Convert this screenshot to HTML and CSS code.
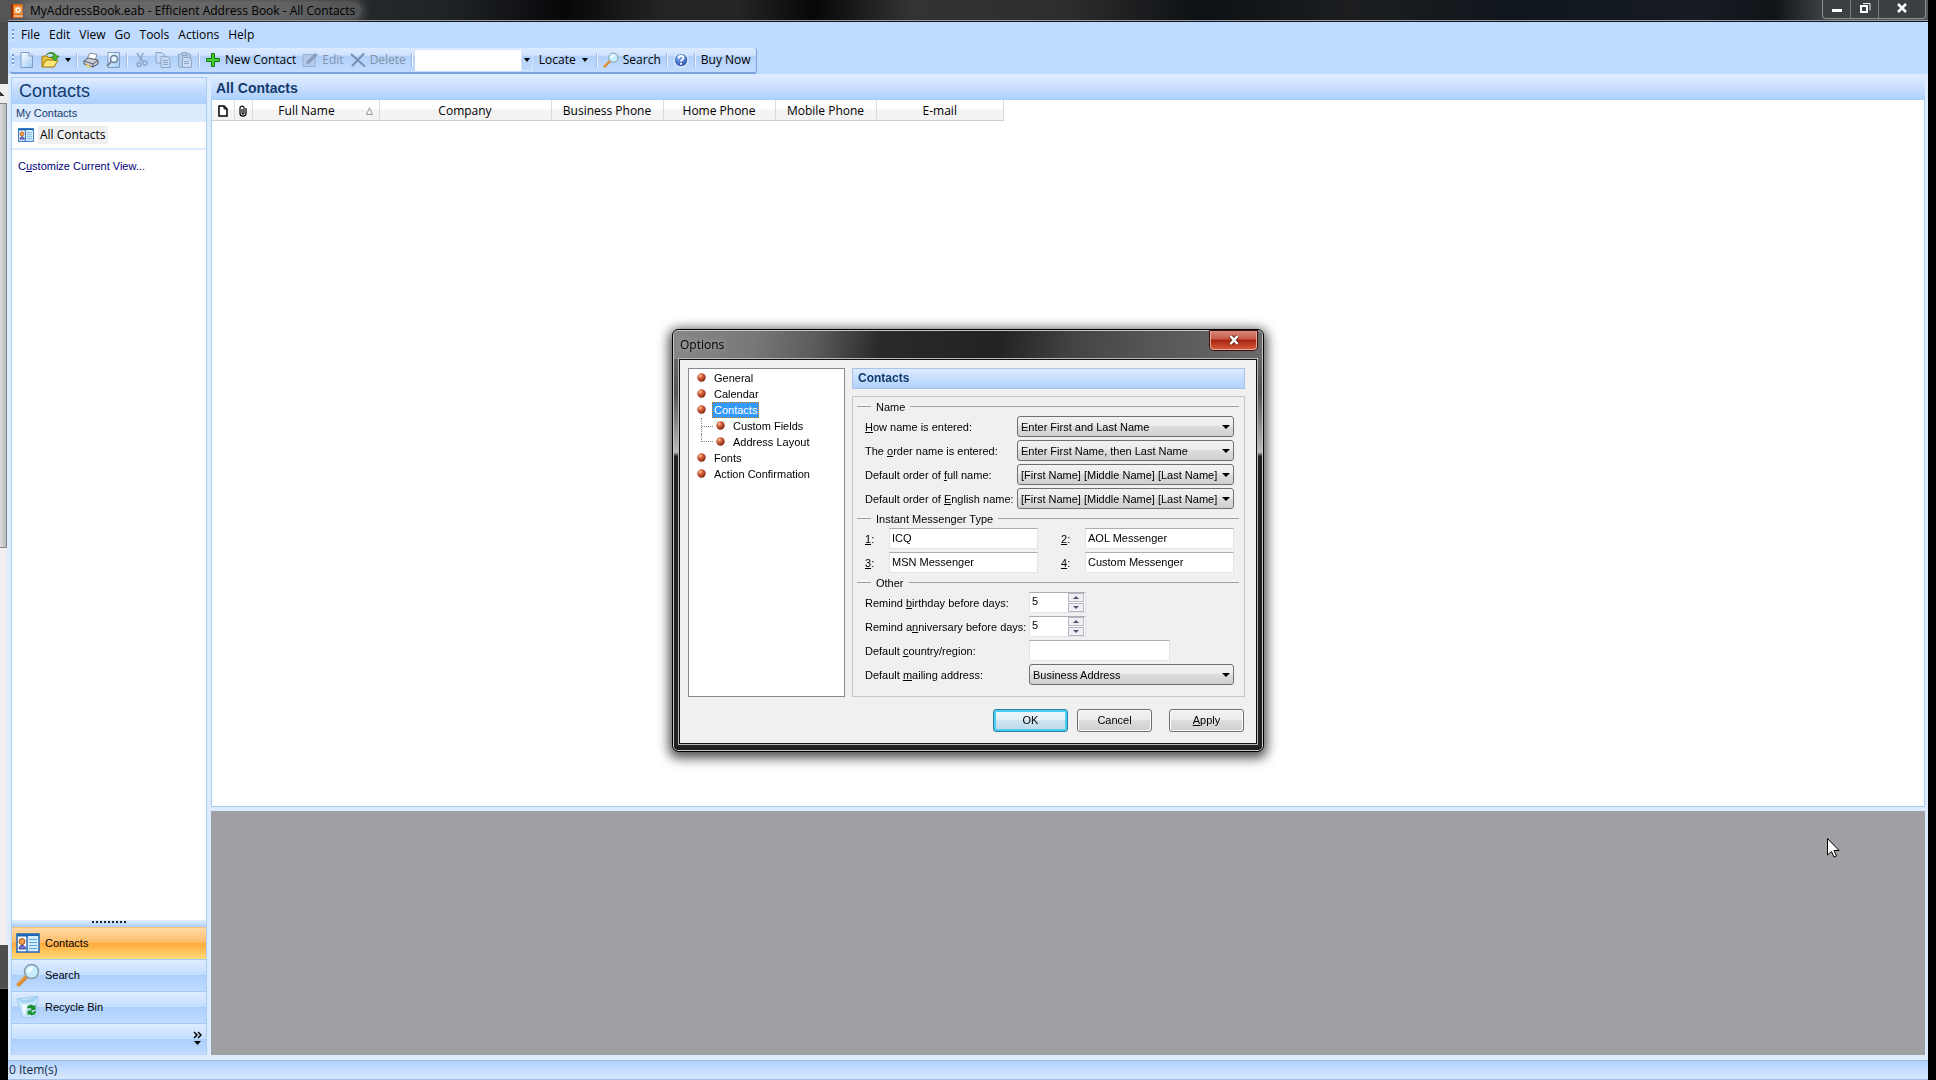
FILE: index.html
```html
<!DOCTYPE html>
<html lang="en">
<head>
<meta charset="utf-8">
<title>MyAddressBook.eab - Efficient Address Book - All Contacts</title>
<link rel="stylesheet" href="styles.css">
</head>
<body>
<svg class="defs" aria-hidden="true">
  <defs>
    <linearGradient id="sky" x1="0" y1="0" x2="1" y2="1"><stop offset="0" stop-color="#fff"/><stop offset="1" stop-color="#9cc8f4"/></linearGradient>
    <linearGradient id="handle" x1="0" y1="0" x2="1" y2="1"><stop offset="0" stop-color="#f7b55a"/><stop offset="1" stop-color="#c96a18"/></linearGradient>
    <radialGradient id="ball" cx=".35" cy=".3" r=".8"><stop offset="0" stop-color="#ffc9b0"/><stop offset=".35" stop-color="#d9603a"/><stop offset="1" stop-color="#6a2010"/></radialGradient>
    <radialGradient id="help" cx=".4" cy=".25" r=".8"><stop offset="0" stop-color="#8db4f0"/><stop offset="1" stop-color="#1b49a8"/></radialGradient>
    <symbol id="magnifier" viewBox="0 0 24 24">
      <path d="M10 14 2.500 21.500" stroke="url(#handle)" stroke-width="4" stroke-linecap="round"/>
      <circle cx="15.500" cy="8.500" r="7" fill="#c4eefb" stroke="#8b9aa8" stroke-width="1.500"/>
      <path d="M11 9a5 5 0 0 1 6-5c0 4-3 6-6 5z" fill="#fff" opacity=".8"/>
    </symbol>
    <symbol id="card" viewBox="0 0 24 20">
      <rect x="1" y="1" width="22" height="18" fill="#fff" stroke="#1c68b8" stroke-width="1.500"/>
      <path d="M1 1h22v2.500H1z" fill="#1c68b8"/><path d="M12 3h10v15H12z" fill="#d4ecfb"/><path d="M11 3v16" stroke="#1c68b8" stroke-width="1.500"/>
      <path d="M13 6.500h8M13 9.500h8M13 12.500h8M13 15.500h8" stroke="#5aa4dc"/>
      <circle cx="6" cy="8.500" r="3" fill="#f0a050" stroke="#a85018"/><path d="M3 16c0-5 6.500-5 6.500 0z" fill="#6c74d0" stroke="#40489c"/>
    </symbol>
    <symbol id="bullet" viewBox="0 0 9 9"><circle cx="4.500" cy="4.500" r="4.200" fill="url(#ball)"/></symbol>
  </defs>
</svg>

<div class="desktop">
  <div class="behind" aria-hidden="true">
    <div class="behind-title"></div>
    <div class="behind-arrow"></div>
    <div class="behind-thumb"></div>
    <div class="behind-track"></div>
    <div class="behind-foot"></div>
    <div class="behind-dark"></div>
  </div>

  <div class="app">
    <header class="titlebar">
      <svg class="app-icon" width="14" height="16" viewBox="0 0 14 16"><rect x="1" y="1" width="12" height="14" rx="1" fill="#e06a10"/><path d="M1 1h2v14H1z" fill="#8c2c08"/><rect x="4" y="3" width="8" height="8" fill="#f8a040"/><circle cx="8" cy="7" r="2" fill="none" stroke="#fff" stroke-width="1.500"/><path d="M4 13h9" stroke="#fff"/></svg>
      <h1 class="title"><span>MyAddressBook.eab - Efficient Address Book - All Contacts</span></h1>
      <div class="window-buttons">
        <button type="button" aria-label="Minimize"><svg width="12" height="12"><path d="M1 8.500h10" stroke="#fff" stroke-width="3"/></svg></button>
        <button type="button" aria-label="Restore"><svg width="12" height="12"><path d="M4 1.500h7v7" fill="none" stroke="#eee"/><rect x="2" y="4" width="6" height="6" fill="none" stroke="#fff" stroke-width="2"/></svg></button>
        <button type="button" class="wide" aria-label="Close"><svg width="12" height="12"><path d="m2 2 8 8M10 2 2 10" stroke="#fff" stroke-width="2.500"/></svg></button>
      </div>
    </header>

    <nav class="menubar" aria-label="Menu">
      <span class="grip"></span>
      <button type="button">File</button><button type="button">Edit</button><button type="button">View</button><button type="button">Go</button><button type="button">Tools</button><button type="button">Actions</button><button type="button">Help</button>
    </nav>

    <div class="toolbar-row">
      <div class="toolbar" role="toolbar" aria-label="Standard">
        <span class="grip"></span>
        <button type="button" class="tool" aria-label="New"><svg width="16" height="16"><path d="M2 .500h8l3.500 3.500v11.500H2z" fill="url(#sky)" stroke="#7c9cc8"/><path d="M10 .500V4h3.500" fill="#e8f2fc" stroke="#7c9cc8"/></svg></button>
        <button type="button" class="tool open" aria-label="Open"><svg width="18" height="16"><path d="M1 15V5l1-1h4l1.500 1.500H14V9" fill="#e8c040" stroke="#9a7810"/><path d="m1 15 4-7h12l-4 7z" fill="#fbe678" stroke="#9a7810"/><path d="M5 3c4-3 7-2 8 2h-3l4 4 4-5h-2.500C14 0 9-1 5 3z" fill="#4cb82c" stroke="#207010" stroke-width=".7"/></svg><span class="arrow"></span></button>
        <span class="sep"></span>
        <button type="button" class="tool" aria-label="Print"><svg width="16" height="16"><path d="m4 7 3-6 7 1.500-2 6z" fill="#fff" stroke="#889"/><path d="m1 9 4-3 10 2v4l-5 3-9-3z" fill="#c8ccd4" stroke="#555c68"/><path d="m1 9 9 3 5-4M10 12v3" fill="none" stroke="#555c68"/><path d="m3 13 4 2" stroke="#e8d060" stroke-width="2"/></svg></button>
        <button type="button" class="tool" aria-label="Print preview"><svg width="16" height="16"><path d="M3 .500h11.500v15H3z" fill="url(#sky)" stroke="#7c9cc8"/><circle cx="9" cy="7" r="3.500" fill="#e4f8ff" stroke="#6a7c98" stroke-width="1.500"/><path d="m6 10-4 4" stroke="#7a8498" stroke-width="2"/></svg></button>
        <span class="sep"></span>
        <button type="button" class="tool" aria-label="Cut" disabled><svg width="16" height="16" fill="none" stroke="#8fa5c6" stroke-width="1.500"><path d="m4 1 6 9M10 1 7 9"/><circle cx="6" cy="12.500" r="2"/><circle cx="12" cy="11" r="2"/></svg></button>
        <button type="button" class="tool" aria-label="Copy" disabled><svg width="16" height="16" fill="#c4daf6" stroke="#8fa5c6"><path d="M1 .500h6L9.500 3v8H1z"/><path d="M6 4.500h6L15 7v8.500H6z"/><path d="M8 8.500h5M8 10.500h5M8 12.500h5"/></svg></button>
        <button type="button" class="tool" aria-label="Paste" disabled><svg width="16" height="16" fill="#b4cbec" stroke="#8fa5c6"><rect x="1.500" y="2" width="12" height="13" rx="1"/><path d="M5 .500h5v3H5z"/><path d="M5.500 5.500H12l2.500 2.500v7.500h-9z" fill="#c8dcf6"/><path d="M7 9.500h5M7 11.500h5"/></svg></button>
        <span class="sep"></span>
        <button type="button" class="tool"><svg width="16" height="16"><path d="M6.500 1.500h3v5h5v3h-5v5h-3v-5h-5v-3h5z" fill="#44d02c" stroke="#167410"/></svg>New Contact</button>
        <button type="button" class="tool" disabled><svg width="16" height="16"><path d="M1 2.500h12v12H1z" fill="#b4cbec" stroke="#98b0d4"/><path d="m4 13 1-4 8-8 3 2-8 8z" fill="#88a0c4"/></svg>Edit</button>
        <button type="button" class="tool" disabled><svg width="16" height="16"><path d="m1 2 14 12.500M14 1.500 2 14" stroke="#7890b4" stroke-width="2"/></svg>Delete</button>
        <span class="sep"></span>
        <span class="combo"><input type="text" aria-label="Locate text"><button type="button" aria-label="Show list"><span class="arrow"></span></button></span>
        <button type="button" class="tool locate">Locate<span class="arrow"></span></button>
        <span class="sep"></span>
        <button type="button" class="tool"><svg width="16" height="16"><use href="#magnifier"/></svg>Search</button>
        <span class="sep"></span>
        <button type="button" class="tool" aria-label="Help"><svg width="16" height="16"><circle cx="8" cy="8" r="7" fill="url(#help)" stroke="#dce8fa" stroke-width="1.500"/><path d="M5.500 6.500c0-3.500 5-3.500 5-.5 0 1.800-2.500 1.800-2.500 3.500" fill="none" stroke="#fff" stroke-width="1.800"/><circle cx="8" cy="11.800" r="1.100" fill="#fff"/></svg></button>
        <span class="sep"></span>
        <button type="button" class="tool">Buy Now</button>
      </div>
    </div>

    <div class="workspace">
      <aside class="sidebar">
        <h2 class="side-title">Contacts</h2>
        <h3 class="side-group">My Contacts</h3>
        <a class="side-item" href="#"><svg width="16" height="14" viewBox="0 0 24 20" preserveAspectRatio="none"><use href="#card" width="24" height="20"/></svg><span>All Contacts</span></a>
        <div class="side-body"><a href="#">C<u>u</u>stomize Current View...</a></div>
        <div class="splitter"><span></span></div>
        <nav class="side-nav" aria-label="Sections">
          <button type="button" class="current"><svg width="24" height="20"><use href="#card"/></svg>Contacts</button>
          <button type="button"><svg width="24" height="24"><use href="#magnifier"/></svg>Search</button>
          <button type="button"><svg width="24" height="24" viewBox="0 0 24 24"><path d="m1 4 21-3-3 20q-6 3.500-13 0z" fill="#c8e8fa" stroke="#90c4ec" stroke-width=".8"/><path d="m1 4 9 1 12-4-4 6-11 1z" fill="#a4d2f4"/><path d="m6 9 5 1-3 11z" fill="#f4fbff"/><path d="M11 13c1-4 5-4 7-2l1.500-1.500V15H14l1.500-1.500c-1-1-2-.5-2.500 0zM20 16c-1 5-5 5-7 3l-1.500 1.500V15.500H17L15.500 17c1 1 2 .5 2.500-1z" fill="#189030"/></svg>Recycle Bin</button>
          <div class="side-more"><button type="button" aria-label="Configure buttons"><svg width="9" height="15"><path d="m1 1 3 3-3 3M5 1l3 3-3 3" fill="none" stroke="#000" stroke-width="1.500"/><path d="M1 10h7l-3.500 4z"/></svg></button></div>
        </nav>
      </aside>

      <main class="content">
        <h2 class="content-title">All Contacts</h2>
        <div class="list">
          <table>
            <colgroup><col class="c-icon"><col class="c-clip"><col class="c-name"><col class="c-company"><col class="c-phone"><col class="c-phone"><col class="c-mobile"><col class="c-mail"></colgroup>
            <thead><tr>
              <th scope="col" aria-label="Type"><svg width="10" height="12"><path d="M1 1h5l3 3v7H1z" fill="#fff" stroke="#000" stroke-width="1.500"/><path d="M6 1v3h3" fill="none" stroke="#000"/></svg></th>
              <th scope="col" aria-label="Attachment"><svg width="8" height="12"><path d="M3 4v4c0 1.500 2 1.500 2 0V3c0-2.500-4-2.500-4 0v5.500c0 3.500 6 3.500 6 0V3" fill="none" stroke="#000" stroke-width="1.200"/></svg></th>
              <th scope="col"><span class="sorted"><span>Full Name</span><svg width="7" height="8"><path d="m3.500.800 3 6.700H.500z" fill="none" stroke="#999"/></svg></span></th>
              <th scope="col">Company</th><th scope="col">Business Phone</th><th scope="col">Home Phone</th><th scope="col">Mobile Phone</th><th scope="col">E-mail</th>
            </tr></thead>
          </table>
        </div>
        <div class="preview"></div>
      </main>
    </div>

    <footer class="status">0 Item(s)</footer>
  </div>
</div>

<div class="modal-layer">
  <section class="dialog" role="dialog" aria-labelledby="dialog-title">
    <header class="dialog-bar">
      <h2 id="dialog-title">Options</h2>
      <button type="button" class="dialog-close" aria-label="Close"><svg width="12" height="10"><path d="m2.500 1 7 8M9.500 1l-7 8" stroke="#5a2018" stroke-width="4"/><path d="m2.500 1 7 8M9.500 1l-7 8" stroke="#fff" stroke-width="2.500"/></svg></button>
    </header>
    <form class="client">
      <div class="panes">
        <ul class="tree">
          <li><svg width="9" height="9"><use href="#bullet"/></svg><span>General</span></li>
          <li><svg width="9" height="9"><use href="#bullet"/></svg><span>Calendar</span></li>
          <li><svg width="9" height="9"><use href="#bullet"/></svg><span class="selected">Contacts</span></li>
          <li class="child"><i></i><svg width="9" height="9"><use href="#bullet"/></svg><span>Custom Fields</span></li>
          <li class="child"><i></i><svg width="9" height="9"><use href="#bullet"/></svg><span>Address Layout</span></li>
          <li><svg width="9" height="9"><use href="#bullet"/></svg><span>Fonts</span></li>
          <li><svg width="9" height="9"><use href="#bullet"/></svg><span>Action Confirmation</span></li>
        </ul>
        <div class="page">
          <h3 class="page-title">Contacts</h3>
          <div class="panel">
            <div class="group">
              <h4>Name</h4>
              <div class="row"><label for="how"><u>H</u>ow name is entered:</label><span class="select"><select id="how"><option>Enter First and Last Name</option></select></span></div>
              <div class="row"><label for="order">The <u>o</u>rder name is entered:</label><span class="select"><select id="order"><option>Enter First Name, then Last Name</option></select></span></div>
              <div class="row"><label for="full">Default order of <u>f</u>ull name:</label><span class="select"><select id="full"><option>[First Name] [Middle Name] [Last Name]</option></select></span></div>
              <div class="row"><label for="english">Default order of <u>E</u>nglish name:</label><span class="select"><select id="english"><option>[First Name] [Middle Name] [Last Name]</option></select></span></div>
            </div>
            <div class="group">
              <h4>Instant Messenger Type</h4>
              <div class="messengers">
                <label for="im1"><u>1</u>:</label><input id="im1" type="text" value="ICQ">
                <label for="im2"><u>2</u>:</label><input id="im2" type="text" value="AOL Messenger">
                <label for="im3"><u>3</u>:</label><input id="im3" type="text" value="MSN Messenger">
                <label for="im4"><u>4</u>:</label><input id="im4" type="text" value="Custom Messenger">
              </div>
            </div>
            <div class="group other">
              <h4>Other</h4>
              <div class="row"><label for="birthday">Remind <u>b</u>irthday before days:</label><span class="spin"><input id="birthday" type="text" value="5"><span><button type="button" aria-label="More days"></button><button type="button" class="down" aria-label="Fewer days"></button></span></span></div>
              <div class="row"><label for="anniversary">Remind a<u>n</u>niversary before days:</label><span class="spin"><input id="anniversary" type="text" value="5"><span><button type="button" aria-label="More days"></button><button type="button" class="down" aria-label="Fewer days"></button></span></span></div>
              <div class="row"><label for="country">Default <u>c</u>ountry/region:</label><input id="country" class="country" type="text"></div>
              <div class="row"><label for="mailing">Default <u>m</u>ailing address:</label><span class="select"><select id="mailing"><option>Business Address</option></select></span></div>
            </div>
          </div>
        </div>
      </div>
      <div class="actions">
        <button type="button" class="push default">OK</button>
        <button type="button" class="push">Cancel</button>
        <button type="button" class="push apply"><u>A</u>pply</button>
      </div>
    </form>
  </section>
</div>

<svg class="pointer" width="13" height="20" aria-hidden="true"><path d="M.500.500v16.500l4-3.500 2.500 5.500 2.500-1-2.500-5.500h5z" fill="#fff" stroke="#000"/></svg>
</body>
</html>
```

FILE: styles.css
```css
* { box-sizing: border-box; }

body {
  margin: 0;
  background: #000;
  color: #000;
  font: 12px/16px "Open Sans", "Noto Sans", sans-serif;
}

h1, h2, h3, h4, ul { margin: 0; padding: 0; font-weight: normal; }
button, input, select { margin: 0; padding: 0; border: 0; background: none; color: inherit; font: inherit; }
svg { display: block; flex: none; }
a { color: inherit; text-decoration: none; }

.defs { position: absolute; width: 0; height: 0; }

.desktop { display: flex; height: 100vh; padding-right: 8px; }

/* Edge of the window behind */
.behind { display: flex; flex-direction: column; width: 8px; background: #dcebfd; }
.behind-title { height: 84px; background: linear-gradient(#555 0 22px, #4a4a4a 22px); }
.behind-arrow { height: 19px; background: linear-gradient(45deg, #333 50%, transparent 0) 0 8px / 4px 4px no-repeat, #eee; }
.behind-thumb { flex: 444; width: 7px; border: 1px solid #888; border-left: 0; background: linear-gradient(90deg, #ddd, #bbb); }
.behind-track { flex: 398; width: 7px; background: #f1efef; }
.behind-foot { height: 43px; background: #4e4e4e; }
.behind-dark { height: 92px; border-top: 1px solid #666; background: #000; }

.app { display: flex; flex-direction: column; flex: 1; min-width: 0; background: #dcebfd; }

/* Title bar */
.titlebar {
  display: flex;
  align-items: center;
  height: 22px;
  padding: 0 2px;
  border-bottom: 1px solid #10141c;
  box-shadow: inset 0 -1px #9a9ca0;
  background: linear-gradient(90deg, #555 0, #4a4a4a 14%, #25282b 19%, #202326 23%, #060709 29%, #222426 34%, #232527 38%, #060708 42%, #333 47%, #2e2e2e 55%, #0d1014 62%, #1c1e20 70%, #10161d 78%, #171c24 88%, #101418 92%, #46494d 95%, #55585c 100%);
}
.title {
  flex: 1;
  font-size: 12px;
  line-height: 20px;
}
.title span {
  padding: 0 6px;
  border-radius: 8px;
  background: rgba(140, 140, 140, .4);
  box-shadow: 0 0 8px 2px rgba(140, 140, 140, .5);
}
.window-buttons {
  display: flex;
  align-self: flex-start;
  height: 19px;
  border: 1px solid #8c8f92;
  border-top: 0;
  border-radius: 0 0 4px 4px;
  background: #3d4043;
}
.window-buttons button { display: grid; place-items: center; width: 28px; padding-bottom: 2px; border-right: 1px solid #7b7e81; }
.window-buttons .wide { width: 46px; border-right: 0; }

/* Menu and tool bars */
.menubar { display: flex; align-items: center; gap: 9px; height: 26px; padding-left: 4px; background: #bfdbff; }
.grip { width: 2px; height: 12px; background: repeating-linear-gradient(#6f9ddc 0 2px, #e4f0ff 2px 4px); }
.menubar .grip { margin-right: -2px; }
.toolbar-row { display: flex; padding-left: 2px; background: #bfdbff; }
.toolbar {
  display: flex;
  align-items: center;
  height: 26px;
  padding: 0 2px;
  border-right: 1px solid #7ba3dc;
  border-bottom: 2px solid #7ba3dc;
  border-radius: 3px;
  background: linear-gradient(#dceaff, #d0e2fd 30%, #b1d0f9 35%, #c3dcfe);
}
.toolbar .grip { margin-right: 2px; }
.tool { display: flex; align-items: center; gap: 4px; padding: 0 3px; white-space: nowrap; }
.tool:disabled { color: #8292aa; }
.arrow { border: solid transparent; border-width: 4px 3px 0; border-top-color: #000; }
.open .arrow { margin-left: 2px; }
.locate { gap: 6px; padding: 0 6px; }
.sep { width: 2px; height: 14px; margin: 0 2px; border-left: 1px solid #9bbce8; background: #f0f6ff; }
.combo { display: flex; height: 21px; }
.combo input { width: 106px; background: #fff; }
.combo button { display: grid; place-items: center; width: 12px; border: 1px solid #d5e6fc; }

/* Workspace */
.workspace { display: flex; flex: 1; gap: 4px; min-height: 0; padding: 3px 3px 5px; }
.sidebar {
  display: flex;
  flex-direction: column;
  width: 196px;
  border: 1px solid #a9cdee;
  border-bottom: 0;
  background: #fff;
  font: 11px/16px "Liberation Sans", Arial, sans-serif;
}
.side-title { padding: 3px 7px 2px; background: linear-gradient(#e0edff, #c0daff 50%, #acd0fb); color: #123a6c; font-size: 18px; line-height: 21px; }
.side-group { padding: 1px 4px; background: #dcebfd; color: #123a6c; font-size: 11px; }
.side-item { display: flex; align-items: center; gap: 4px; padding: 4px 6px; border-bottom: 2px solid #dcebfd; font: 12px/18px "Open Sans", "Noto Sans", sans-serif; }
.side-item span { padding: 0 2px; background: #f0efef; }
.side-body { flex: 1; padding: 8px 6px; color: #00007c; }
.splitter { display: grid; place-items: start center; height: 7px; padding-top: 1px; background: linear-gradient(#e4efff, #a9cefb); }
.splitter span { width: 35px; height: 2px; background: repeating-linear-gradient(90deg, #222 0 2px, transparent 2px 4px); }
.side-nav > * {
  display: flex;
  align-items: center;
  gap: 5px;
  width: 100%;
  height: 32px;
  padding: 0 4px 2px;
  border-top: 1px solid #a4cbf8;
  background: linear-gradient(#deecff, #c5deff 48%, #abcffb 50%, #c1dcfe);
}
.side-nav .current { border-color: #f8c078; background: linear-gradient(#ffd9a6, #ffbe6a 46%, #ffab3c 50%, #ffdb78); }
.side-more { justify-content: flex-end; }

.content { display: flex; flex-direction: column; flex: 1; min-width: 0; }
.content-title {
  padding: 0 5px;
  background: linear-gradient(#dceaff, #c2dbff 60%, #aad0fb);
  color: #123a6c;
  font: bold 14px/23px "Liberation Sans", Arial, sans-serif;
}
.list { flex: 1; border: 1px solid #a9cdee; border-top: 0; background: #fff; }
.preview { height: 244px; margin-top: 4px; background: #a0a0a4; }
table { border-collapse: collapse; table-layout: fixed; width: 792px; }
th { height: 20px; padding: 2px 0 0; border-right: 1px solid #dcdcdc; border-bottom: 1px solid #cfcfcf; background: linear-gradient(#fff 45%, #f3f3f3 50%); font-weight: normal; line-height: 17px; }
th svg { margin: 0 auto; }
.sorted { display: grid; grid-template-columns: 1fr auto; align-items: center; gap: 5px; padding-right: 6px; }
.c-icon { width: 22px; }
.c-clip { width: 18px; }
.c-name { width: 127px; }
.c-company { width: 172px; }
.c-phone { width: 112px; }
.c-mobile { width: 101px; }

.status { height: 20px; padding-left: 1px; border: 1px solid #9fbfe8; border-width: 1px 0; background: linear-gradient(#b0d2fc, #d8e8ff); color: #1c2c44; line-height: 18px; }

/* Options dialog */
.modal-layer { position: fixed; inset: 0; display: grid; place-items: center; }
.dialog {
  width: 592px;
  padding: 0 6px 7px;
  border: 1px solid #000;
  border-radius: 6px;
  background: linear-gradient(#777 0, #666 8%, #555 15%, #bbb 29%, #222 30%);
  box-shadow: inset 0 0 0 1px #c8c8c8, 0 3px 12px 3px rgba(0, 0, 0, .7);
  font: 11px/16px "Liberation Sans", Arial, sans-serif;
}
.dialog-bar {
  display: flex;
  justify-content: space-between;
  height: 28px;
  margin: 1px -5px 0;
  border-radius: 5px 5px 0 0;
  background: linear-gradient(100deg, #888 0, #777 14%, #5c5c5c 24%, #2a2a2a 35%, #222 55%, #444 68%, #555 80%, #6a6a6a);
}
.dialog-bar h2 { padding-left: 6px; font: 12px/27px "Open Sans", "Noto Sans", sans-serif; text-shadow: 0 0 6px #aaa, 0 0 10px #aaa; }
.dialog-close {
  display: grid;
  place-items: center;
  width: 47px;
  height: 19px;
  margin-right: 5px;
  border: 1px solid #e8a8a0;
  border-top: 0;
  border-radius: 0 0 4px 4px;
  background: linear-gradient(#d88a7c, #c85848 45%, #a82410 50%, #d45838);
  box-shadow: 0 0 0 1px #401008;
}
.client { padding: 8px 11px 11px 8px; border: 1px solid #111; outline: 1px solid #b8b8b8; background: #f0f0f0; }
.panes { display: flex; gap: 7px; }
.tree { width: 157px; padding: 1px 8px; border: 1px solid #828790; background: #fff; list-style: none; }
.tree li { display: flex; align-items: center; gap: 6px; height: 16px; }
.tree span { padding: 0 2px; white-space: nowrap; }
.tree .selected { outline: 1px dotted #d08020; outline-offset: -1px; background: #3399ff; color: #fff; }
.tree i { width: 12px; height: 16px; margin: 0 -6px 0 4px; border-left: 1px dotted #888; background: repeating-linear-gradient(90deg, #888 0 1px, transparent 1px 2px) 0 8px / 100% 1px no-repeat; }
.tree .child + .child i { height: 8px; margin-bottom: 8px; border-bottom: 1px dotted #888; background: none; }
.tree .child svg { margin-left: 3px; }
.page { flex: 1; }
.page-title { padding-left: 5px; border: 1px solid #a9c4e4; background: linear-gradient(#dceaff, #b0d2fc); color: #123a6c; font-size: 12px; font-weight: bold; line-height: 19px; }
.panel { margin-top: 7px; padding: 2px 5px 9px 4px; border: 1px solid #c0c8d0; }
.group h4 { display: flex; align-items: center; gap: 5px; height: 16px; font-size: 11px; }
.group h4::before, .group h4::after { width: 14px; height: 1px; background: #a0a0a0; content: ""; }
.group h4::after { flex: 1; }
.row { display: grid; grid-template-columns: 152px 1fr; align-items: center; height: 24px; padding: 0 5px 0 8px; white-space: nowrap; }
.other .row { grid-template-columns: 164px 1fr; }
.select { display: grid; position: relative; }
.select::after { position: absolute; top: 9px; right: 4px; border: solid transparent; border-width: 4px 4px 0; border-top-color: #000; content: ""; }
.select select { appearance: none; height: 21px; padding: 0 3px; border: 1px solid #707070; border-radius: 3px; background: linear-gradient(#f2f2f2, #ebebeb 48%, #dddddd 50%, #cfcfcf); }
.panel input { height: 21px; padding: 0 2px 2px; border: 1px solid #e3e3e8; border-top-color: #abadb3; background: #fff; }
.messengers { display: grid; grid-template-columns: 24px 149px 23px 24px 149px; align-items: center; grid-auto-rows: 24px; padding-left: 8px; }
.messengers label:nth-of-type(even) { grid-column: 4; }
.spin { display: flex; width: 57px; height: 21px; border: 1px solid #e3e3e8; border-top-color: #abadb3; background: #fff; }
.spin input { width: 38px; height: 18px; border: 0; }
.spin > span { display: grid; gap: 1px; width: 16px; }
.spin button { display: grid; place-items: center; border: 1px solid #b8b8c4; background: #f0f0f4; }
.spin button::before { border: solid transparent; border-width: 0 3px 3px; border-bottom-color: #4c5470; content: ""; }
.spin .down::before { border-width: 3px 3px 0; border-top-color: #4c5470; }
.panel .country { width: 141px; }
.actions { display: flex; justify-content: flex-end; gap: 9px; padding: 12px 1px 0 0; }
.push { width: 75px; height: 23px; border: 1px solid #707070; border-radius: 3px; background: linear-gradient(#f2f2f2, #ebebeb 48%, #dddddd 50%, #cfcfcf); box-shadow: inset 0 0 0 1px #fbfbfb; }
.default { border-color: #2c7ca8; background: linear-gradient(#eef6fa, #e2f0f8 48%, #cfe4f0 50%, #bcd8ea); box-shadow: inset 0 0 0 2px #48d0f0; }
.apply { margin-left: 8px; }

.pointer { position: absolute; top: 838px; left: 1827px; }
```
